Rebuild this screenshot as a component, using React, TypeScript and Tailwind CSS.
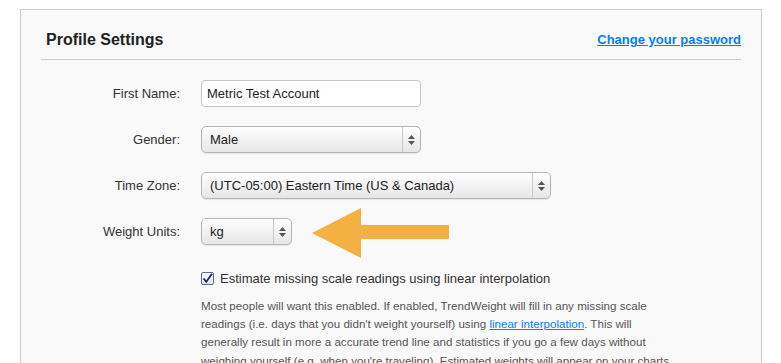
import React from 'react';

const font = { fontFamily: '"Liberation Sans", Arial, sans-serif' };

function Select({ value, width }: { value: string; width: string }) {
  return (
    <div
      className={`${width} h-[27px] flex items-stretch rounded-[5px] border border-[#b5b5b5] bg-gradient-to-b from-[#ffffff] to-[#e6e6e6] shadow-[0_1px_1px_rgba(0,0,0,0.08)]`}
    >
      <div className="flex-1 flex items-center pl-[8px] text-[13px] text-[#222]">{value}</div>
      <div className="w-[18px] border-l border-[#c8c8c8] flex flex-col items-center justify-center gap-[2px]">
        <svg width="7" height="4" viewBox="0 0 7 4"><path d="M0 4 L3.5 0 L7 4 Z" fill="#555" /></svg>
        <svg width="7" height="4" viewBox="0 0 7 4"><path d="M0 0 L3.5 4 L7 0 Z" fill="#555" /></svg>
      </div>
    </div>
  );
}

function Row({ label, children }: { label: string; children: React.ReactNode }) {
  return (
    <div className="flex items-center gap-[21px] h-[27px]">
      <div className="w-[139px] text-right text-[13px] text-[#333]">{label}</div>
      {children}
    </div>
  );
}

export default function App() {
  return (
    <div className="w-[781px] h-[363px] overflow-hidden bg-white pt-[9px] pl-[20px]" style={font}>
      <div className="w-[742px] h-[400px] border border-[#cccccc] bg-[#f9f9f9] px-[20px] pt-[20px]">
        <div className="flex items-center justify-between border-b border-[#cccccc] pb-[9px] pl-[5px] h-[30px]">
          <h2 className="text-[16px] font-bold text-[#222]">Profile Settings</h2>
          <a href="#" className="text-[13px] font-bold text-[#0a7df6] underline">Change your password</a>
        </div>

        <div className="mt-[20px] flex flex-col gap-[19px]">
          <Row label="First Name:">
            <div className="w-[220px] h-[27px] rounded-[4px] border border-[#c4c4c4] bg-white flex items-center pl-[5px] text-[13px] text-[#222]">
              Metric Test Account
            </div>
          </Row>
          <Row label="Gender:">
            <Select value="Male" width="w-[220px]" />
          </Row>
          <Row label="Time Zone:">
            <Select value="(UTC-05:00) Eastern Time (US & Canada)" width="w-[350px]" />
          </Row>
          <div className="relative">
            <Row label="Weight Units:">
              <Select value="kg" width="w-[91px]" />
            </Row>
            <svg
              className="absolute left-[270px] top-[-11px]"
              width="140"
              height="52"
              viewBox="0 0 140 52"
            >
              <path d="M1 26 L50 1 L50 18 L138 18 L138 32 L50 32 L50 51 Z" fill="#f5b043" />
            </svg>
          </div>
        </div>

        <div className="ml-[160px] mt-[24px]">
          <label className="flex items-center gap-[6px] text-[13px] text-[#333]">
            <span className="w-[13px] h-[13px] rounded-[2px] border border-[#5a6b8c] bg-gradient-to-b from-[#ffffff] to-[#dfe6f2] flex items-center justify-center">
              <svg width="11" height="11" viewBox="0 0 11 11">
                <path d="M1.5 5.5 L4.3 8.8 L10 0.8" stroke="#1f2f5a" strokeWidth="1.9" fill="none" />
              </svg>
            </span>
            Estimate missing scale readings using linear interpolation
          </label>
          <p className="mt-[8px] w-[520px] whitespace-nowrap text-[11.6px] leading-[18.4px] text-[#555]">
            Most people will want this enabled. If enabled, TrendWeight will fill in any missing scale
            <br />
            readings (i.e. days that you didn't weight yourself) using{' '}
            <a href="#" className="text-[#0a7df6] underline">linear interpolation</a>. This will
            <br />
            generally result in more a accurate trend line and statistics if you go a few days without
            <br />
            weighing yourself (e.g. when you're traveling). Estimated weights will appear on your charts
            <br />
            and tables.
          </p>
        </div>
      </div>
    </div>
  );
}
